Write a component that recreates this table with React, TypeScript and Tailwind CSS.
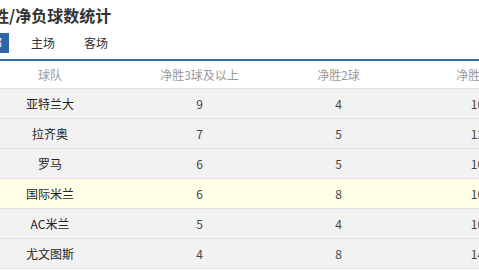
import React from "react";

const rows = [
  { team: "亚特兰大", a: 9, b: 4, c: 10 },
  { team: "拉齐奥", a: 7, b: 5, c: 12 },
  { team: "罗马", a: 6, b: 5, c: 10 },
  { team: "国际米兰", a: 6, b: 8, c: 10, hl: true },
  { team: "AC米兰", a: 5, b: 4, c: 10 },
  { team: "尤文图斯", a: 4, b: 8, c: 14 },
];

export default function App() {
  return (
    <div className="w-[479px] h-[270px] overflow-hidden bg-white font-['Noto_Sans_CJK_SC',sans-serif] text-[#333]">
      <h2 className="-ml-[23px] h-[33px] pt-[4px] whitespace-nowrap text-[16px] font-bold leading-[22px] text-[#333]">
        净胜/净负球数统计
      </h2>

      <div className="-ml-[29px] flex h-[20px] gap-[15px] text-[12px] leading-[20px]">
        <span className="bg-[#2d67a8] px-[7px] text-white">全部</span>
        <span className="px-[7px] text-[#333]">主场</span>
        <span className="px-[7px] text-[#333]">客场</span>
      </div>

      <div className="mt-[6px] h-[2px] bg-[#3a6ea8]" />

      <div className="-ml-[30px] w-[577px]">
        <div className="grid h-[28px] grid-cols-[160px_139px_139px_139px] items-center border-b border-[#e2e2e2] text-center text-[12px] text-[#999]">
          <span>球队</span>
          <span>净胜3球及以上</span>
          <span>净胜2球</span>
          <span>净胜1球</span>
        </div>
        {rows.map((r) => (
          <div
            key={r.team}
            className={
              r.hl
                ? "grid h-[30px] grid-cols-[160px_139px_139px_139px] items-center border-b border-[#e2e2e2] bg-[#fffee6] text-center text-[12px]"
                : "grid h-[30px] grid-cols-[160px_139px_139px_139px] items-center border-b border-[#e2e2e2] bg-[#f2f2f2] text-center text-[12px]"
            }
          >
            <span className="text-[#222]">{r.team}</span>
            <span className="text-[#444]">{r.a}</span>
            <span className="text-[#444]">{r.b}</span>
            <span className="text-[#444]">{r.c}</span>
          </div>
        ))}
      </div>
    </div>
  );
}
